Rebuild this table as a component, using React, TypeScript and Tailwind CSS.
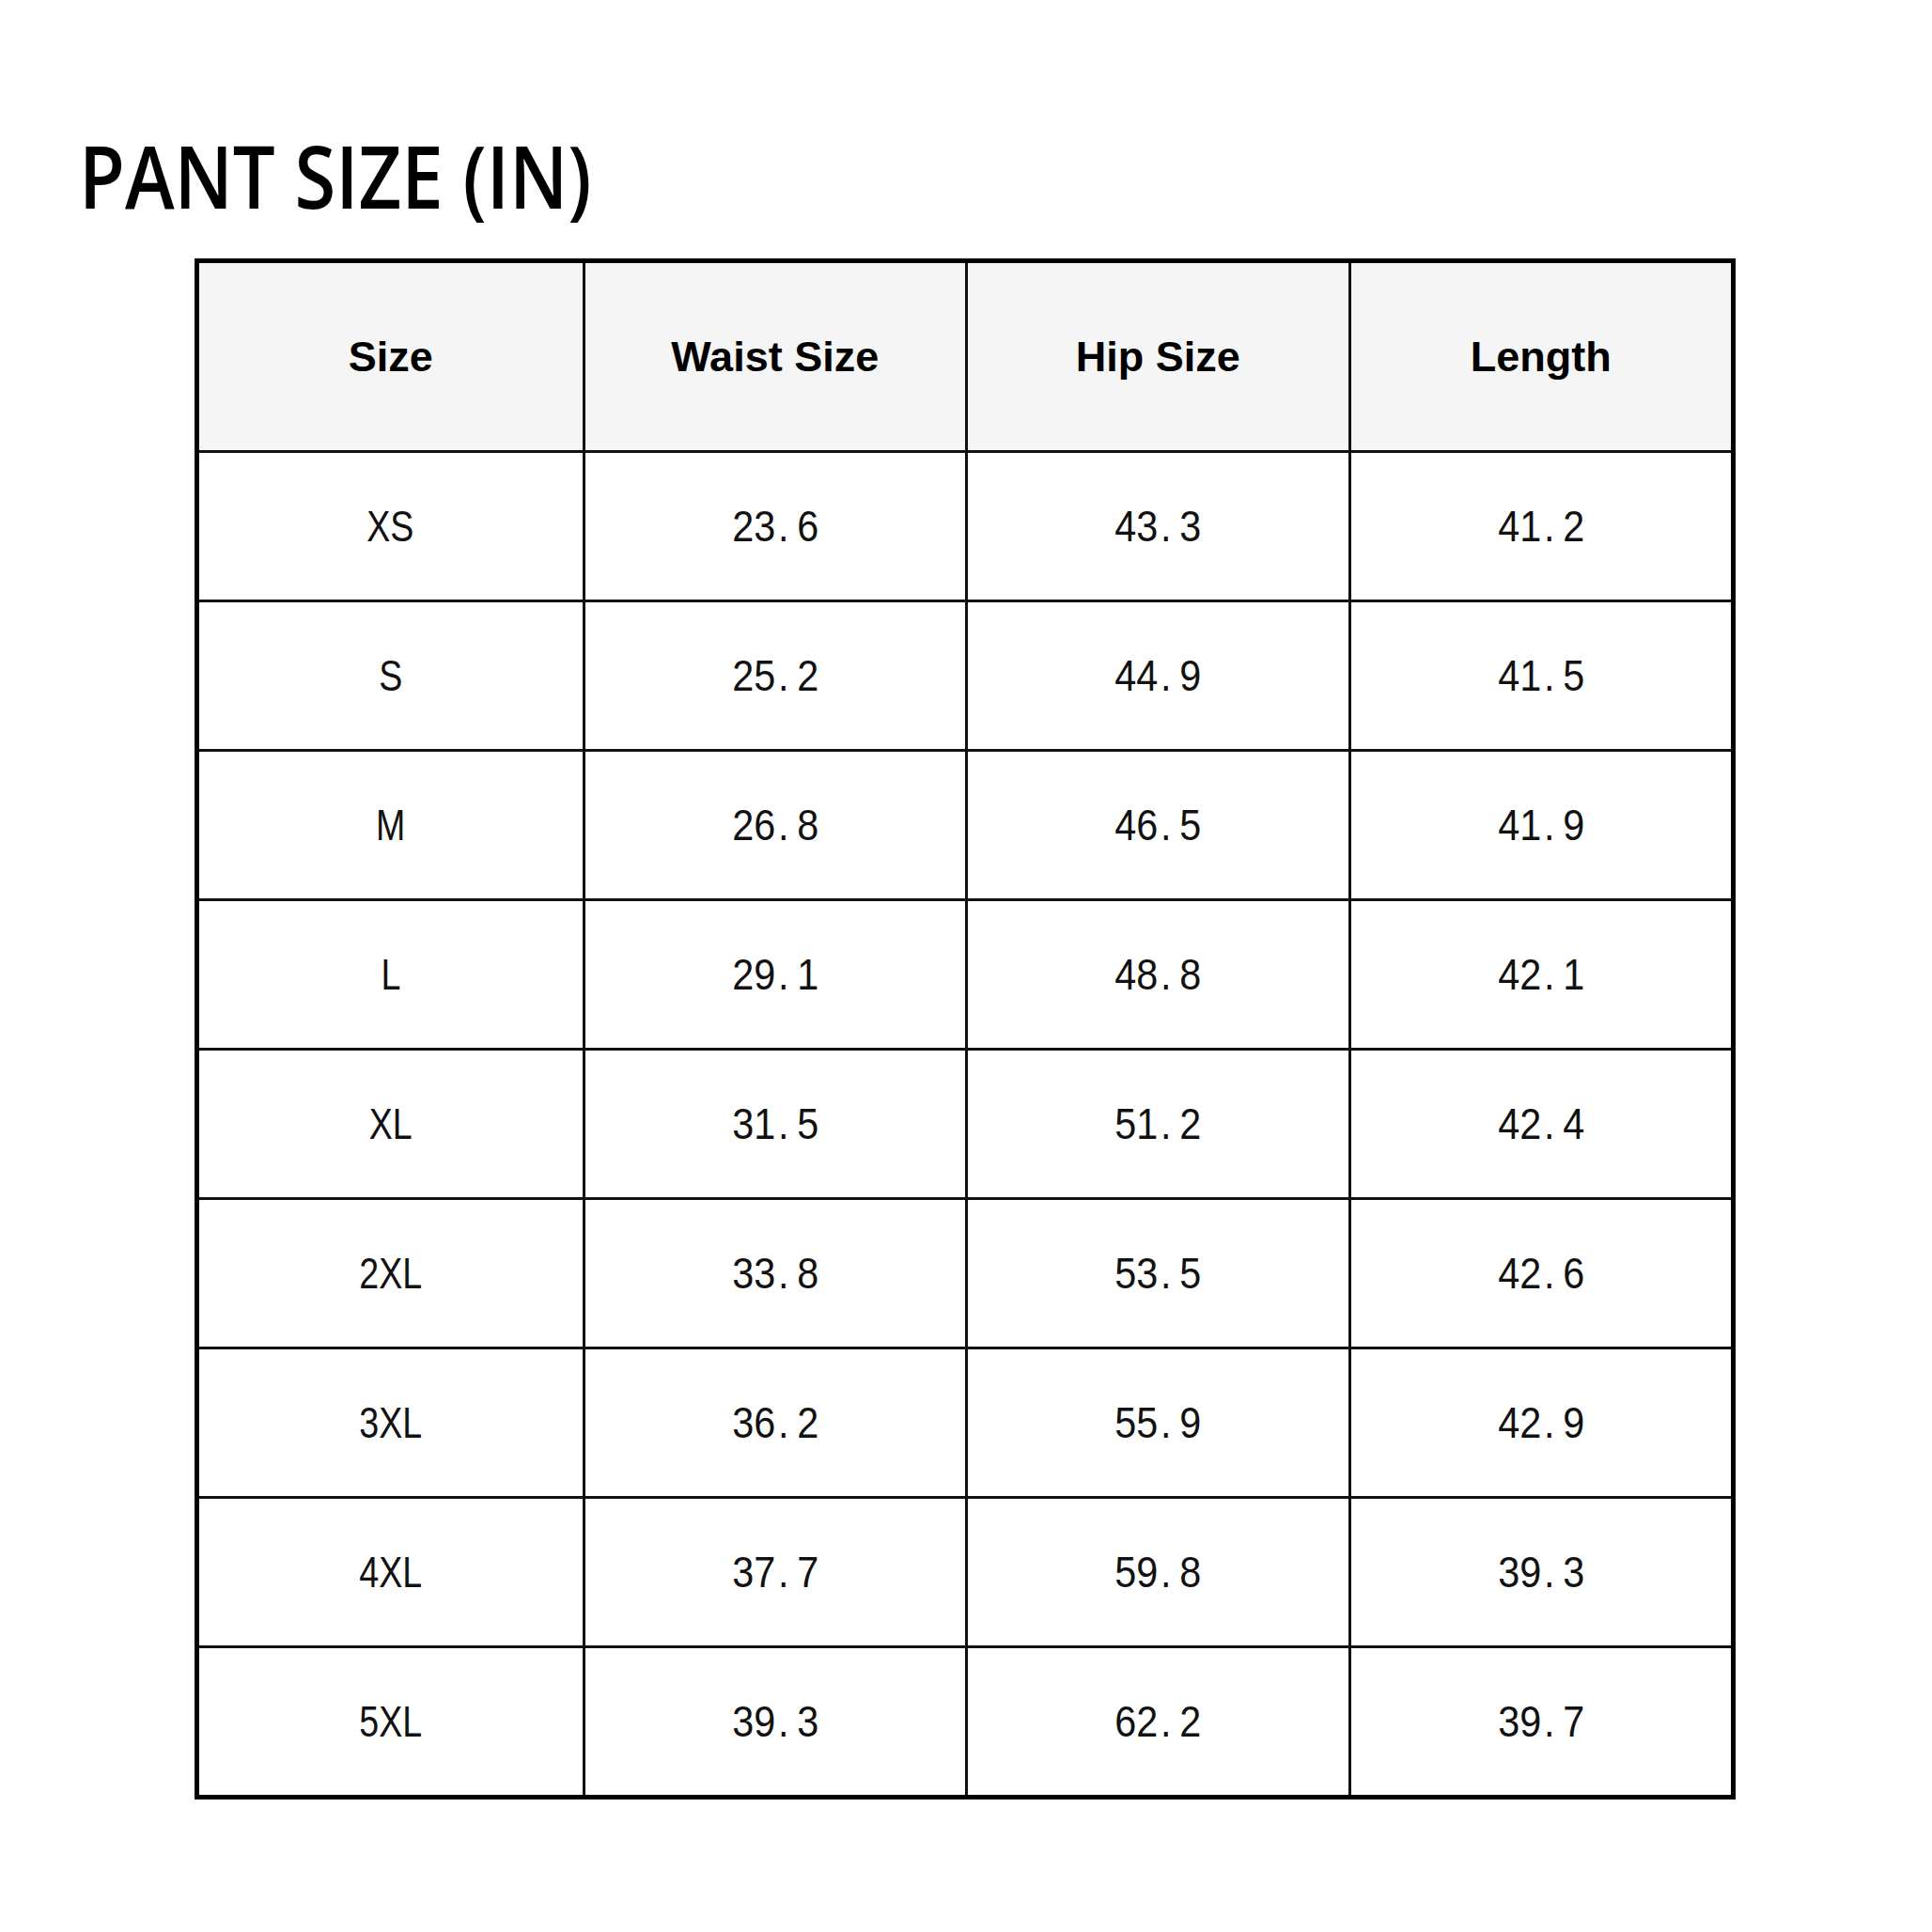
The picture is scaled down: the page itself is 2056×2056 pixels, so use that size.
import React from 'react';

const rows: [string, string, string, string][] = [
  ['XS', '23.6', '43.3', '41.2'],
  ['S', '25.2', '44.9', '41.5'],
  ['M', '26.8', '46.5', '41.9'],
  ['L', '29.1', '48.8', '42.1'],
  ['XL', '31.5', '51.2', '42.4'],
  ['2XL', '33.8', '53.5', '42.6'],
  ['3XL', '36.2', '55.9', '42.9'],
  ['4XL', '37.7', '59.8', '39.3'],
  ['5XL', '39.3', '62.2', '39.7'],
];

const headers = ['Size', 'Waist Size', 'Hip Size', 'Length'];

const Num: React.FC<{ value: string }> = ({ value }) => {
  const [a, b] = value.split('.');
  return (
    <span className="inline-block scale-x-[0.88] whitespace-nowrap">
      {a}
      <span className="inline-block w-[26px] pl-[3px] text-left">.</span>
      {b}
    </span>
  );
};

export default function App() {
  return (
    <div className="w-[2056px] h-[2056px] bg-white pt-[141px]">
      <h1 className="pl-[84px] text-[92px] leading-none text-black font-['Open_Sans',sans-serif] font-semibold">
        <span className="inline-block origin-left scale-x-[0.865] whitespace-nowrap">PANT SIZE (IN)</span>
      </h1>

      <div className="ml-[207px] mt-[42px] w-[1640px] border-[5px] border-black font-['Liberation_Sans',Arial,sans-serif] text-[#111]">
        <div className="grid grid-cols-4 h-[199px] bg-[#f5f5f5]">
          {headers.map((h, i) => (
            <div
              key={h}
              className={`flex items-center justify-center text-[45px] font-bold text-black ${i > 0 ? 'border-l-[3px] border-[#111]' : ''}`}
            >
              {h}
            </div>
          ))}
        </div>
        {rows.map((r) => (
          <div key={r[0]} className="grid grid-cols-4 h-[159px] border-t-[3px] border-[#111]">
            <div className="flex items-center justify-center text-[47px]">
              <span className="inline-block scale-x-[0.8]">{r[0]}</span>
            </div>
            {r.slice(1).map((v, i) => (
              <div key={i} className="flex items-center justify-center text-[47px] border-l-[3px] border-[#111]">
                <Num value={v} />
              </div>
            ))}
          </div>
        ))}
      </div>
    </div>
  );
}
